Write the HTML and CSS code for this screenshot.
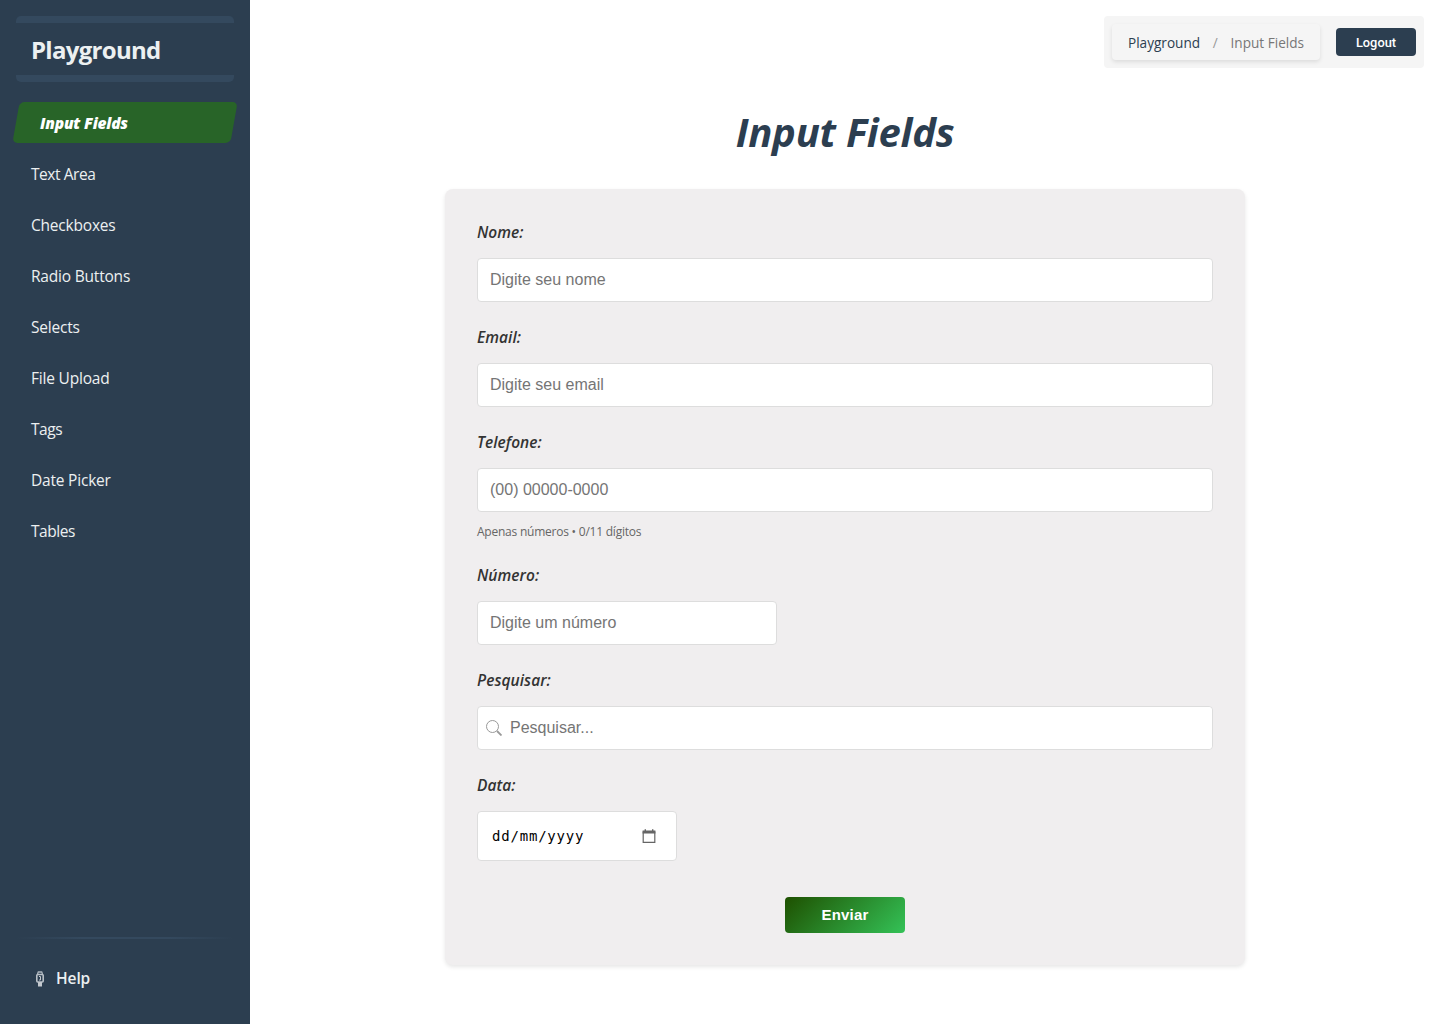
FILE: index.html
```html
<!DOCTYPE html>
<html lang="pt-BR">
<head>
<meta charset="utf-8">
<title>Playground - Input Fields</title>
<link rel="stylesheet" href="styles.css">
</head>
<body>
<div class="layout">
  <aside class="sidebar">
    <div class="brand"><span>Playground</span></div>
    <nav class="menu">
      <a class="menu-item active"><span>Input Fields</span></a>
      <a class="menu-item tight"><span>Text Area</span></a>
      <a class="menu-item"><span>Checkboxes</span></a>
      <a class="menu-item"><span>Radio Buttons</span></a>
      <a class="menu-item"><span>Selects</span></a>
      <a class="menu-item"><span>File Upload</span></a>
      <a class="menu-item tight"><span>Tags</span></a>
      <a class="menu-item"><span>Date Picker</span></a>
      <a class="menu-item tight"><span>Tables</span></a>
    </nav>
    <div class="divider"></div>
    <a class="help">
      <svg width="8" height="16" viewBox="0 0 8 16">
        <path d="M1.5 3 2.3 1h3.4l.8 2" fill="none" stroke="#aeb6be" stroke-width="1.3"/>
        <rect x=".8" y="3.500" width="6.400" height="7.500" rx="1" fill="#2c3e50" stroke="#b9c0c7" stroke-width="1.600"/>
        <path d="M3 5.500h1.500v3.500H3" fill="none" stroke="#c3c8ce" stroke-width="1"/>
        <path d="M2 11h4v4.500H2z" fill="#c3c8ce"/>
      </svg>
      <span>Help</span>
    </a>
  </aside>
  <main class="content">
    <header class="topbar">
      <div class="breadcrumb"><span class="crumb-home">Playground</span><span class="sep">/</span><span class="crumb-current">Input Fields</span></div>
      <button class="logout">Logout</button>
    </header>
    <h1><span>Input Fields</span></h1>
    <form class="card">
      <div class="group"><label><span>Nome:</span></label><input type="text" placeholder="Digite seu nome"></div>
      <div class="group"><label><span>Email:</span></label><input type="email" placeholder="Digite seu email"></div>
      <div class="group"><label><span>Telefone:</span></label><input type="tel" placeholder="(00) 00000-0000"><small><span>Apenas números • 0/11 dígitos</span></small></div>
      <div class="group"><label><span>Número:</span></label><input class="number" type="text" placeholder="Digite um número"></div>
      <div class="group"><label><span>Pesquisar:</span></label>
        <div class="search">
          <svg width="16" height="16" viewBox="0 0 16 16" fill="none" stroke="#999"><circle cx="6.5" cy="6.5" r="6"/><path d="m11 11 4.5 4.5" stroke-width="1.8"/></svg>
          <input type="text" placeholder="Pesquisar...">
        </div>
      </div>
      <div class="group"><label><span>Data:</span></label>
        <div class="date"><span>dd/mm/yyyy</span>
          <svg width="14" height="15" viewBox="0 0 14 15"><path d="M1.2 3h11.6v10.400H1.2z" fill="none" stroke="#656565" stroke-width="1.2"/><path d="M.6 1.600h12.8v2.900H.6zM2.6.3H4V3H2.600zM10 .3h1.400V3H10z" fill="#656565"/></svg>
        </div>
      </div>
      <button class="submit" type="button">Enviar</button>
    </form>
  </main>
</div>
</body>
</html>
```
FILE: styles.css
```css
* { box-sizing: border-box; }
body { margin: 0; background: #fff; color: #333; font-family: "Open Sans", "Noto Sans", sans-serif; }
.layout { display: flex; height: 1024px; }
.sidebar { width: 250px; padding: 16px; background: #2c3e50; color: #ecf0f1; display: flex; flex-direction: column; }
.brand { height: 66px; padding: 0 15px; border-top: 7px solid #34495e; border-bottom: 7px solid #34495e; border-radius: 5px; display: flex; align-items: center; font-size: 24px; font-weight: 700; letter-spacing: -0.7px; }
.menu { display: flex; flex-direction: column; gap: 10px; margin-top: 20px; }
.menu-item { position: relative; height: 41px; padding: 1px 15px 0; display: flex; align-items: center; font-size: 15.5px; letter-spacing: -0.2px; }
.tight { letter-spacing: -0.45px; }
.active { z-index: 0; padding-left: 24px; color: #fff; font-weight: 800; font-style: italic; letter-spacing: -0.2px; }
.active::before { content: ""; position: absolute; inset: 0; z-index: -1; background: #286428; border-radius: 5px; transform: skewX(-10deg); }
.divider { height: 2px; margin-top: auto; background: linear-gradient(90deg, transparent, #34495e 30%, #34495e 70%, transparent); }
.help { height: 69px; padding: 8px 20px 0; display: flex; align-items: center; gap: 12px; font-size: 15.5px; font-weight: 600; letter-spacing: -0.1px; }
.help svg { margin-top: 3px; }

.content { flex: 1; display: flex; flex-direction: column; align-items: center; padding: 16px; }
.topbar { align-self: flex-end; width: 320px; height: 52px; padding: 8px; display: flex; align-items: center; justify-content: space-between; background: #f5f5f5; border-radius: 4px; }
.breadcrumb { width: 208px; height: 36px; padding: 1px 16px 0; display: flex; align-items: center; justify-content: space-between; font-size: 13.6px; border-radius: 4px; box-shadow: 0 2px 4px rgba(0, 0, 0, .1); }
.crumb-home { color: #2c3e50; }
.sep { color: #999; }
.crumb-current { color: #777; }
.logout { width: 80px; height: 28px; padding: 0; border: 0; border-radius: 4px; background: #2c3e50; color: #fff; font: 500 12.8px Roboto, sans-serif; }
h1 { margin: 36px 0 29px; height: 56px; font-size: 40px; line-height: 56px; font-style: italic; font-weight: 700; color: #2c3e50; letter-spacing: -0.25px; }
.card { width: 800px; height: 776px; padding: 32px; display: flex; flex-direction: column; gap: 24px; background: #f0eeef; border-radius: 8px; box-shadow: 0 2px 4px rgba(0, 0, 0, .1); }
.group { display: flex; flex-direction: column; }
label { height: 24px; margin-bottom: 13px; font-size: 15.5px; line-height: 23px; font-style: italic; font-weight: 600; color: #333; letter-spacing: 0.05px; }
input { width: 100%; height: 44px; padding: 0 12px; border: 1px solid #ddd; border-radius: 4px; background: #fff; font: 16px "Liberation Sans", Arial, sans-serif; }
input::placeholder { color: #757575; opacity: 1; }
.number { width: 300px; }
small { height: 28px; padding-top: 12px; font-size: 12px; line-height: 16px; color: #666; letter-spacing: -0.23px; }
.search { height: 44px; padding-left: 8px; display: flex; align-items: center; gap: 8px; background: #fff; border: 1px solid #ddd; border-radius: 4px; }
.search svg { flex: none; }
.search input { flex: 1; height: 42px; padding: 0; border: 0; }
.date { width: 200px; height: 50px; padding: 0 20px 0 14px; display: flex; align-items: center; justify-content: space-between; background: #fff; border: 1px solid #ddd; border-radius: 4px; color: #000; font: 14px "DejaVu Sans Mono", monospace; letter-spacing: 0.8px; }
.date span { padding-bottom: 1px; }
.submit { align-self: center; width: 120px; height: 36px; margin-top: 12px; padding: 0 0 2px; border: 0; border-radius: 4px; background: linear-gradient(135deg, #1e5000, #34c257); color: #fff; font: 700 15px "Liberation Sans", Arial, sans-serif; letter-spacing: 0.2px; }
```
